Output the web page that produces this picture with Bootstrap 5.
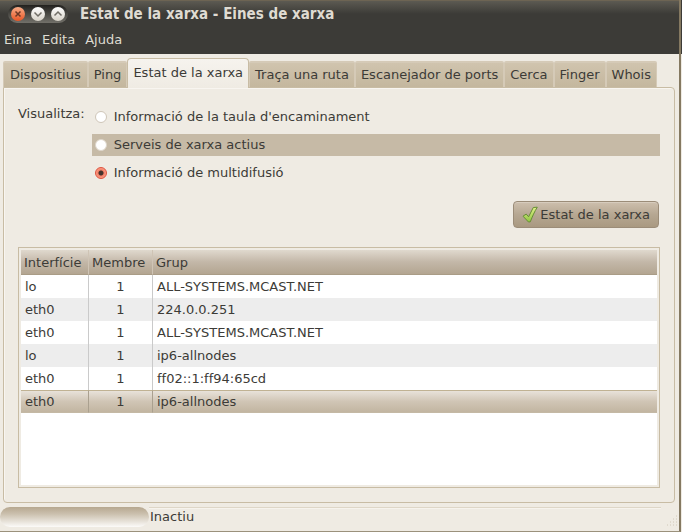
<!DOCTYPE html>
<html lang="ca">
<head>
<meta charset="utf-8">
<meta name="viewport" content="width=device-width, initial-scale=1">
<title>Estat de la xarxa - Eines de xarxa</title>
<link href="https://cdn.jsdelivr.net/npm/bootstrap@5.3.0/dist/css/bootstrap.min.css" rel="stylesheet">
<style>
:root { --line: #c8bca4; --paper: #efebe3; --ink: #3c3b37; }
body {
  font-family: "DejaVu Sans", sans-serif;
  font-size: 13px; line-height: 22px; color: var(--ink);
  background: linear-gradient(#3c3b37 54px, #efebe3 54px);
  padding-right: 1px; overflow: hidden;
}
.app-window { background: var(--paper); border-right: 2px solid #857961; border-bottom: 1px solid #9b917c; }
.title-bar { height: 29px; background: linear-gradient(#5c5a52, #3c3b37 13px); border-top: 1px solid #6d6453; padding-left: 8px; padding-bottom: 2px; gap: 12px; color: #dfdbd2; }
.title-text { font-family: "DejaVu Sans Condensed", "DejaVu Sans", sans-serif; font-size: 15px; font-weight: bold; line-height: 22px; color: #dfdbd2; }
.window-buttons { height: 18px; width: 60px; border-radius: 9px; background: linear-gradient(#22211e, #73716a); padding: 0 3px; gap: 6px; }
.window-buttons button { width: 14px; height: 14px; border: 0; padding: 0; background: none; }
.window-buttons svg, .run-button svg { display: block; }
.menu-bar { background: #3c3b37; height: 25px; padding: 0 4px; gap: 10px; }
.menu-bar a { color: #dfdbd2; text-decoration: none; }
.content-area { padding: 4px 4px 4px 3px; }
.tool-tabs { border: 0; position: relative; z-index: 1; margin-bottom: -1px; }
.tool-tabs .nav-link {
  color: var(--ink); margin: 0; padding: 0 5px; height: 26px; line-height: 24px;
  border: 1px solid #d5cab7; border-width: 2px 1px 0; border-radius: 2px 2px 0 0;
  background: linear-gradient(#d0c4ae, #c4b79e);
}
.tool-tabs .nav-item:first-child .nav-link { padding: 0 6px; }
.tool-tabs .nav-link.active {
  height: 30px; line-height: 28px; color: var(--ink);
  border: 1px solid var(--line); border-bottom: 0; border-radius: 4px 4px 0 0;
  background: linear-gradient(#f6f3ee, #efebe3);
}
.tool-tabs .nav-item:not(:has(.active)) .nav-link { margin-bottom: 1px; }
.tool-panel { border: 1px solid var(--line); border-radius: 0 4px 4px 4px; padding: 15px 14px 14px; box-shadow: inset 1px 1px #f8f5f0; }
.view-options { gap: 7px; }
.option-list { gap: 6px; padding-top: 3px; }
.option-row { min-height: 22px; margin: 0; padding-left: 3px; gap: 7px; }
.option-row label { margin-top: -1px; }
.option-row.hovered { background: #c6baa6; }
.option-row .form-check-input { width: 12px; height: 12px; margin: 0; float: none; border: 1px solid #cfc6b8; background: #fff; }
.option-row .form-check-input:checked { border-color: #df513b; background: radial-gradient(circle, #44322b 0 2px, #f58066 3px, #f99d87 5px); }
.option-row.hovered .form-check-input { border-color: #ded6ca; }
.run-button {
  height: 27px; padding: 0 8px; gap: 1px; font-size: 13px; line-height: 22px; color: var(--ink);
  border: 1px solid #9b8c78; border-radius: 4px; background: linear-gradient(#cdbfad, #b6a792 50%, #a99981);
  box-shadow: inset 0 1px #d7ccbd;
}
.run-row { margin-top: 17px; margin-bottom: 19px; padding-right: 1px; }
.group-list { border: 1px solid var(--line); padding: 2px; }
.list-body { background: #fff; min-height: 235px; }
.group-table { table-layout: fixed; width: 100%; border-collapse: separate; border-spacing: 0; line-height: 21px; }
.group-table th { height: 25px; padding: 0 3px; font-weight: normal; border-bottom: 1px solid #a99c86; background: linear-gradient(#e0d9ce, #c3b7a8 50%, #b3a591); }
.group-table td { height: 23px; padding: 0 4px; }
.group-table th:not(:last-child) { border-right: 1px solid #cfc4b5; }
.group-table td:not(:last-child) { border-right: 1px solid #cacaca; }
.group-table tbody tr:nth-child(even) td { background: #ededed; }
.group-table tbody tr.selected td { border-top: 1px solid #c0b293; border-bottom: 1px solid #c4b9a5; border-right-color: #aaa08f; background: linear-gradient(#e8e2da, #d0c5b5 50%, #c2b5a1); }
.col-interface { width: 68px; }
.col-member { width: 64px; }
.status-row { height: 24px; }
.activity-track { width: 149px; height: 20px; border-radius: 10px; background: linear-gradient(#b6a78f, #cbc0ae 35%, #fcfbf9); }
.status-text { flex: 1; border-top: 1px solid #ded6c7; margin-right: 18px; padding-left: 1px; line-height: 18px; height: 20px; box-shadow: inset 0 1px #f6f3ed; }
.resize-grip { right: 1px; bottom: 4px; }
</style>
<script src="https://cdn.jsdelivr.net/npm/bootstrap@5.3.0/dist/js/bootstrap.bundle.min.js"></script>
</head>
<body>
<div class="app-window position-relative">
  <header class="title-bar d-flex align-items-center">
    <div class="window-buttons d-flex align-items-center">
      <button type="button" aria-label="Tanca"><svg width="14" height="14" viewBox="0 0 14 14"><defs><linearGradient id="closeFill" x2="0" y2="1"><stop stop-color="#f8ac87"/><stop offset="1" stop-color="#e85525"/></linearGradient></defs><circle cx="7" cy="7" r="7" fill="url(#closeFill)"/><path d="M4.500 4.500l5 5m0-5l-5 5" stroke="#6b3826" stroke-width="1.500"/></svg></button>
      <button type="button" aria-label="Minimitza"><svg width="14" height="14" viewBox="0 0 14 14"><defs><linearGradient id="plainFill" x2="0" y2="1"><stop stop-color="#fff"/><stop offset="1" stop-color="#d7d2c8"/></linearGradient></defs><circle cx="7" cy="7" r="7" fill="url(#plainFill)"/><path d="M3.500 5.500L7 9l3.500-3.500" fill="none" stroke="#706d66" stroke-width="1.500"/></svg></button>
      <button type="button" aria-label="Maximitza"><svg width="14" height="14" viewBox="0 0 14 14"><circle cx="7" cy="7" r="7" fill="url(#plainFill)"/><path d="M3.500 8.500L7 5l3.500 3.500" fill="none" stroke="#706d66" stroke-width="1.500"/></svg></button>
    </div>
    <h1 class="title-text m-0">Estat de la xarxa - Eines de xarxa</h1>
  </header>
  <nav class="menu-bar d-flex align-items-start" aria-label="Menú">
    <a href="#eina">Eina</a><a href="#edita">Edita</a><a href="#ajuda">Ajuda</a>
  </nav>
  <main class="content-area">
    <ul class="nav nav-tabs tool-tabs flex-nowrap align-items-end text-nowrap">
      <li class="nav-item"><a class="nav-link" href="#dispositius">Dispositius</a></li>
      <li class="nav-item"><a class="nav-link" href="#ping">Ping</a></li>
      <li class="nav-item"><a class="nav-link active" aria-current="page" href="#estat">Estat de la xarxa</a></li>
      <li class="nav-item"><a class="nav-link" href="#ruta">Traça una ruta</a></li>
      <li class="nav-item"><a class="nav-link" href="#ports">Escanejador de ports</a></li>
      <li class="nav-item"><a class="nav-link" href="#cerca">Cerca</a></li>
      <li class="nav-item"><a class="nav-link" href="#finger">Finger</a></li>
      <li class="nav-item"><a class="nav-link" href="#whois">Whois</a></li>
    </ul>
    <section class="tool-panel" id="estat">
      <div class="view-options d-flex align-items-start" role="radiogroup" aria-labelledby="viewLabel">
        <div id="viewLabel">Visualitza:</div>
        <div class="option-list d-flex flex-column flex-grow-1">
          <div class="option-row form-check d-flex align-items-center"><input class="form-check-input" type="radio" name="view" id="routes"><label for="routes">Informació de la taula d'encaminament</label></div>
          <div class="option-row hovered form-check d-flex align-items-center"><input class="form-check-input" type="radio" name="view" id="services"><label for="services">Serveis de xarxa actius</label></div>
          <div class="option-row form-check d-flex align-items-center"><input class="form-check-input" type="radio" name="view" id="multicast" checked><label for="multicast">Informació de multidifusió</label></div>
        </div>
      </div>
      <div class="run-row d-flex justify-content-end">
        <button type="button" class="btn run-button d-flex align-items-center"><svg width="17" height="17" viewBox="0 0 17 17"><defs><linearGradient id="tickFill" x2="0" y2="1"><stop stop-color="#e2f18c"/><stop offset="1" stop-color="#8fc640"/></linearGradient></defs><path d="M1 10.200L4.200 8.100 6.600 10.800 11.300 1.500 15.300 1.200C12.500 5.500 10.400 10.500 8.300 15.800L6.500 16Z" fill="url(#tickFill)" stroke="#668d35" stroke-linejoin="round"/></svg><span>Estat de la xarxa</span></button>
      </div>
      <div class="group-list">
        <div class="list-body">
          <table class="group-table">
            <thead><tr><th scope="col" class="col-interface">Interfície</th><th scope="col" class="col-member">Membre</th><th scope="col">Grup</th></tr></thead>
            <tbody>
              <tr><td>lo</td><td class="text-center">1</td><td>ALL-SYSTEMS.MCAST.NET</td></tr>
              <tr><td>eth0</td><td class="text-center">1</td><td>224.0.0.251</td></tr>
              <tr><td>eth0</td><td class="text-center">1</td><td>ALL-SYSTEMS.MCAST.NET</td></tr>
              <tr><td>lo</td><td class="text-center">1</td><td>ip6-allnodes</td></tr>
              <tr><td>eth0</td><td class="text-center">1</td><td>ff02::1:ff94:65cd</td></tr>
              <tr class="selected"><td>eth0</td><td class="text-center">1</td><td>ip6-allnodes</td></tr>
            </tbody>
          </table>
        </div>
      </div>
    </section>
  </main>
  <footer class="status-row d-flex align-items-start">
    <div class="activity-track" role="progressbar" aria-label="Activitat" aria-valuenow="0" aria-valuemin="0" aria-valuemax="100"></div>
    <div class="status-text">Inactiu</div>
    <svg class="resize-grip position-absolute" width="12" height="12" viewBox="0 0 12 12" aria-hidden="true"><path d="M10 1h1M7 4h1m2 0h1M4 7h1m2 0h1m2 0h1M1 10h1m2 0h1m2 0h1m2 0h1" stroke="#d0c8b8"/></svg>
  </footer>
</div>
</body>
</html>
